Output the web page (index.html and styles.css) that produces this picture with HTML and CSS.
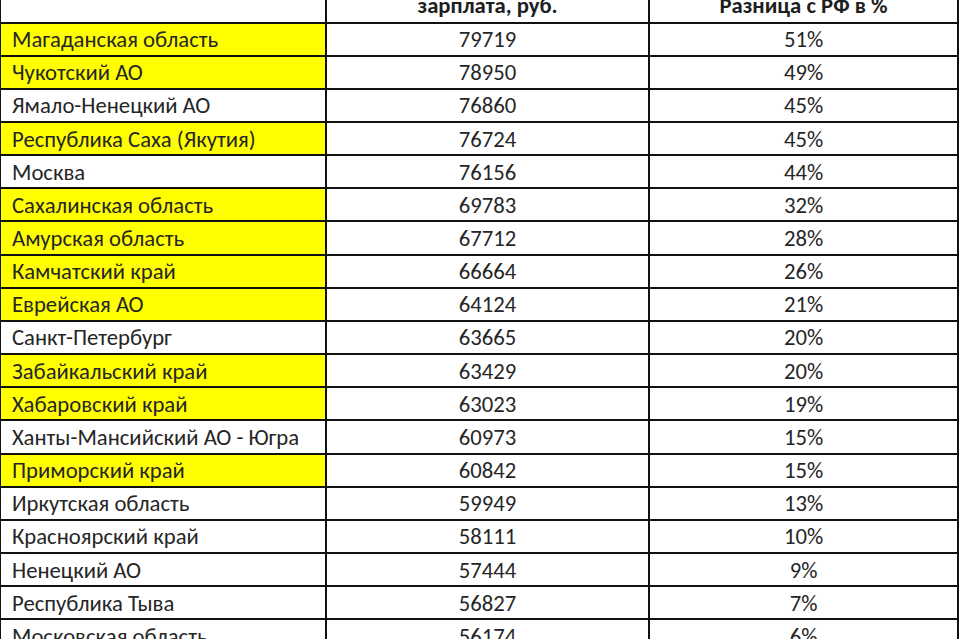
FILE: index.html
```
<!DOCTYPE html>
<html lang="ru">
<head>
<meta charset="utf-8">
<title>Зарплаты по регионам</title>
<link rel="stylesheet" href="styles.css">
</head>
<body>
<div class="sheet">
  <div class="cell head"></div>
  <div class="cell head center">зарплата, руб.</div>
  <div class="cell head center">Разница с РФ в %</div>

  <div class="cell name hl">Магаданская область</div><div class="cell center">79719</div><div class="cell center">51%</div>
  <div class="cell name hl">Чукотский АО</div><div class="cell center">78950</div><div class="cell center">49%</div>
  <div class="cell name">Ямало-Ненецкий АО</div><div class="cell center">76860</div><div class="cell center">45%</div>
  <div class="cell name hl">Республика Саха (Якутия)</div><div class="cell center">76724</div><div class="cell center">45%</div>
  <div class="cell name">Москва</div><div class="cell center">76156</div><div class="cell center">44%</div>
  <div class="cell name hl">Сахалинская область</div><div class="cell center">69783</div><div class="cell center">32%</div>
  <div class="cell name hl">Амурская область</div><div class="cell center">67712</div><div class="cell center">28%</div>
  <div class="cell name hl">Камчатский край</div><div class="cell center">66664</div><div class="cell center">26%</div>
  <div class="cell name hl">Еврейская АО</div><div class="cell center">64124</div><div class="cell center">21%</div>
  <div class="cell name">Санкт-Петербург</div><div class="cell center">63665</div><div class="cell center">20%</div>
  <div class="cell name hl">Забайкальский край</div><div class="cell center">63429</div><div class="cell center">20%</div>
  <div class="cell name hl">Хабаровский край</div><div class="cell center">63023</div><div class="cell center">19%</div>
  <div class="cell name">Ханты-Мансийский АО - Югра</div><div class="cell center">60973</div><div class="cell center">15%</div>
  <div class="cell name hl">Приморский край</div><div class="cell center">60842</div><div class="cell center">15%</div>
  <div class="cell name">Иркутская область</div><div class="cell center">59949</div><div class="cell center">13%</div>
  <div class="cell name">Красноярский край</div><div class="cell center">58111</div><div class="cell center">10%</div>
  <div class="cell name">Ненецкий АО</div><div class="cell center">57444</div><div class="cell center">9%</div>
  <div class="cell name">Республика Тыва</div><div class="cell center">56827</div><div class="cell center">7%</div>
  <div class="cell name">Московская область</div><div class="cell center">56174</div><div class="cell center">6%</div>
</div>
</body>
</html>
```
FILE: styles.css
```
html, body {
  margin: 0;
  padding: 0;
  background: #ffffff;
  overflow: hidden;
}

body {
  width: 960px;
  height: 639px;
}

.sheet {
  display: grid;
  grid-template-columns: 326px 323px 309px;
  grid-template-rows: 50px;
  grid-auto-rows: 33.17px;
  margin-top: -26.5px;
  margin-left: -1px;
  border-left: 2px solid #111;
  width: max-content;
  font-family: Carlito, Calibri, "Liberation Sans", sans-serif;
  font-size: 22.7px;
  line-height: 28px;
  color: #262626;
}

.cell {
  box-sizing: border-box;
  border-right: 2px solid #111;
  border-bottom: 2px solid #111;
  display: flex;
  align-items: center;
  white-space: nowrap;
  overflow: hidden;
}

.name {
  padding-left: 11px;
}

.center {
  justify-content: center;
  text-align: center;
}

.head {
  align-items: flex-end;
  padding-bottom: 2.5px;
  font-weight: bold;
  color: #1e1e1e;
}

.hl {
  background: #ffff00;
}
```
